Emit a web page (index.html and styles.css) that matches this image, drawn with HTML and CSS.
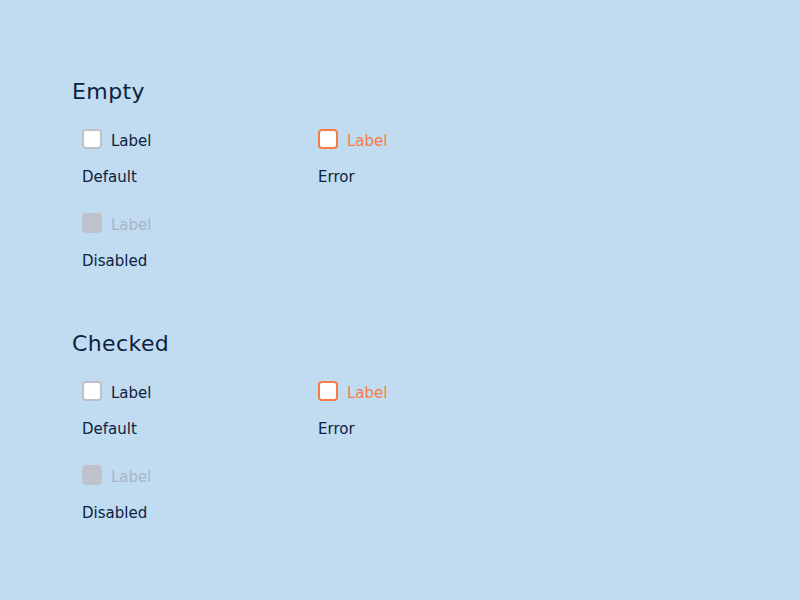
FILE: index.html
```html
<!DOCTYPE html>
<html>
<head>
<meta charset="utf-8">
<link rel="stylesheet" href="styles.css">
</head>
<body>
<main class="page">
  <section class="section">
    <h2 class="title">Empty</h2>
    <div class="grid">
      <div class="item">
        <label class="check"><span class="box"></span><span class="label">Label</span></label>
        <div class="caption">Default</div>
      </div>
      <div class="item">
        <label class="check error"><span class="box"></span><span class="label">Label</span></label>
        <div class="caption">Error</div>
      </div>
      <div class="item">
        <label class="check disabled"><span class="box"></span><span class="label">Label</span></label>
        <div class="caption">Disabled</div>
      </div>
    </div>
  </section>
  <section class="section">
    <h2 class="title">Checked</h2>
    <div class="grid">
      <div class="item">
        <label class="check"><span class="box"></span><span class="label">Label</span></label>
        <div class="caption">Default</div>
      </div>
      <div class="item">
        <label class="check error"><span class="box"></span><span class="label">Label</span></label>
        <div class="caption">Error</div>
      </div>
      <div class="item">
        <label class="check disabled"><span class="box"></span><span class="label">Label</span></label>
        <div class="caption">Disabled</div>
      </div>
    </div>
  </section>
</main>
</body>
</html>
```
FILE: styles.css
```css
html, body {
  margin: 0;
  padding: 0;
  background: #c1dcf1;
}
body {
  font-family: "DejaVu Sans", "Open Sans", sans-serif;
  color: #0d2240;
  width: 800px;
  height: 600px;
  overflow: hidden;
}
.page {
  padding: 77px 0 0 72px;
  display: flex;
  flex-direction: column;
  gap: 58px;
}
.title {
  margin: 0;
  padding-top: 1px;
  font-size: 22px;
  line-height: 28px;
  font-weight: 400;
  letter-spacing: 0.4px;
  color: #0d2240;
}
.grid {
  margin-top: 23px;
  padding-left: 10px;
  display: grid;
  grid-template-columns: 236px 236px;
  row-gap: 26px;
}
.item {
  display: flex;
  flex-direction: column;
  gap: 17px;
}
.check {
  display: flex;
  align-items: center;
  gap: 9px;
  height: 20px;
}
.box {
  width: 20px;
  height: 20px;
  box-sizing: border-box;
  border: 2px solid #bcc0c9;
  border-radius: 4px;
  background: #ffffff;
}
.label {
  font-size: 15px;
  line-height: 20px;
  padding-top: 4px;
  color: #0d2240;
}
.caption {
  font-size: 15px;
  line-height: 20px;
  padding-top: 1px;
  color: #0d2240;
}
.error .box {
  border-color: #f57c45;
}
.error .label {
  color: #f57c45;
}
.disabled .box {
  border-color: #bfc3cb;
  background: #bfc3cb;
}
.disabled .label {
  color: #a8b6c6;
}
```
